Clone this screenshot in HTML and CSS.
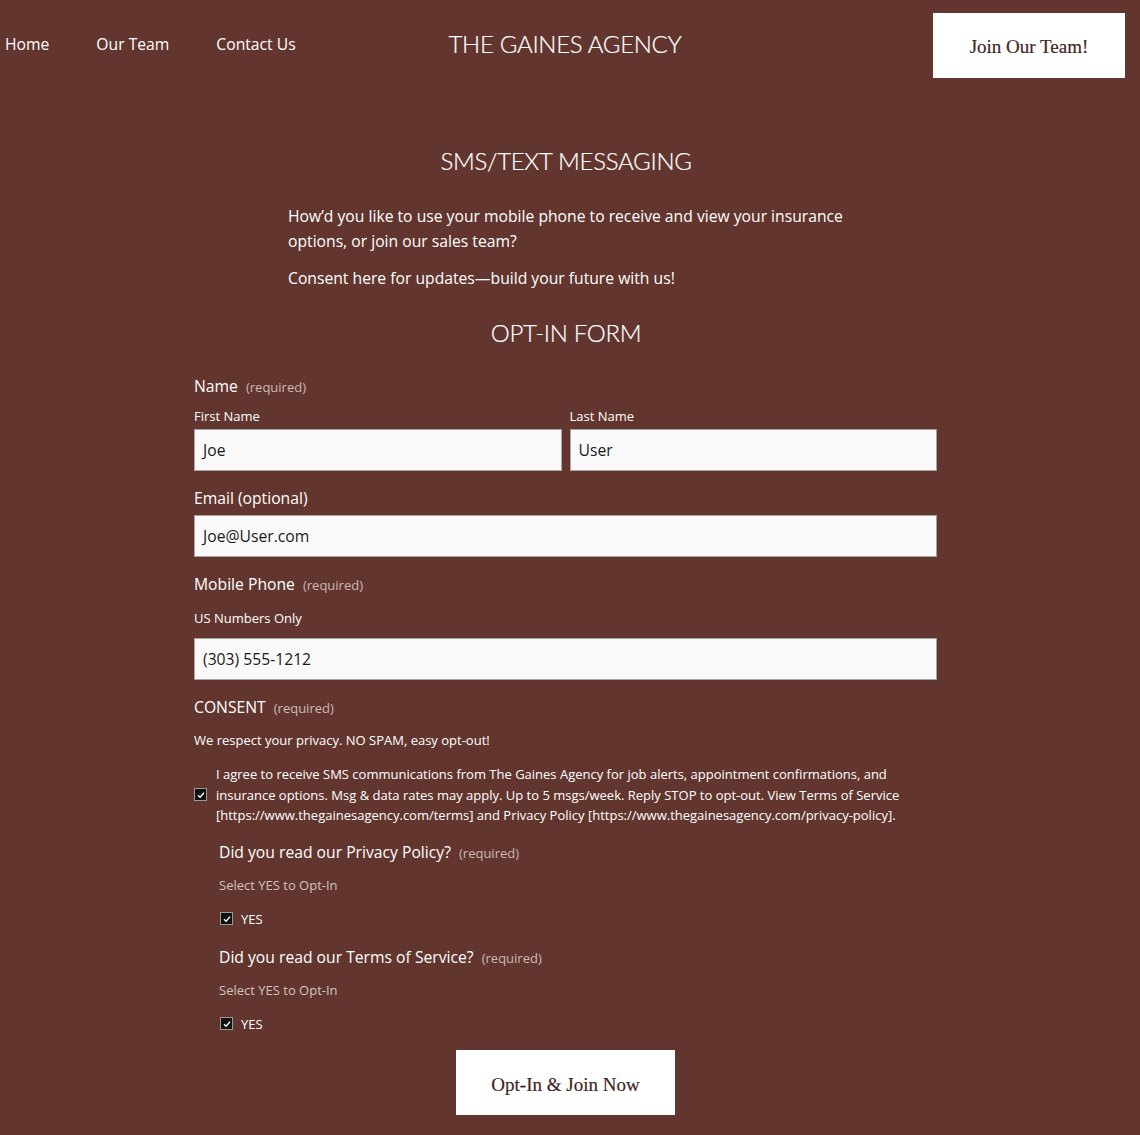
FILE: index.html
```html
<!DOCTYPE html>
<html lang="en">
<head>
<meta charset="utf-8">
<title>SMS/Text Messaging – The Gaines Agency</title>
<link rel="stylesheet" href="styles.css">
</head>
<body>
<header class="header">
  <nav class="nav">
    <a href="#" class="nav-link">Home</a>
    <a href="#" class="nav-link">Our Team</a>
    <a href="#" class="nav-link">Contact Us</a>
  </nav>
  <div class="brand">THE GAINES AGENCY</div>
  <div class="header-right">
    <a href="#" class="btn btn-header">Join Our Team!</a>
  </div>
</header>

<main class="main">
  <h1 class="title title-top">SMS/TEXT MESSAGING</h1>
  <div class="intro">
    <p class="intro-p">How’d you like to use your mobile phone to receive and view your insurance options, or join our sales team?</p>
    <p class="intro-p intro-p2">Consent here for updates—build your future with us!</p>
  </div>
  <h2 class="title title-form">OPT-IN FORM</h2>

  <form class="form">
    <div class="label label-name">Name <span class="req">(required)</span></div>
    <div class="name-row">
      <div class="name-col">
        <div class="sublabel">First Name</div>
        <div class="input">Joe</div>
      </div>
      <div class="name-col">
        <div class="sublabel">Last Name</div>
        <div class="input">User</div>
      </div>
    </div>

    <div class="label label-gap">Email (optional)</div>
    <div class="input input-email">Joe@User.com</div>

    <div class="label label-gap label-phone">Mobile Phone <span class="req">(required)</span></div>
    <div class="sublabel sublabel-phone">US Numbers Only</div>
    <div class="input input-phone">(303) 555-1212</div>

    <div class="label label-gap">CONSENT <span class="req">(required)</span></div>
    <div class="note">We respect your privacy. NO SPAM, easy opt-out!</div>

    <div class="consent">
      <span class="check check-consent"><svg viewBox="0 0 10 10" class="tick"><path d="M2 5.2 L4.1 7.3 L8 2.8" /></svg></span>
      <p class="consent-text">I agree to receive SMS communications from The Gaines Agency for job alerts, appointment confirmations, and insurance options. Msg &amp; data rates may apply. Up to 5 msgs/week. Reply STOP to opt-out. View Terms of Service [https://www.thegainesagency.com/terms] and Privacy Policy [https://www.thegainesagency.com/privacy-policy].</p>
    </div>

    <div class="sub">
      <div class="label sub-q">Did you read our Privacy Policy? <span class="req">(required)</span></div>
      <div class="hint">Select YES to Opt-In</div>
      <div class="yes-row">
        <span class="check"><svg viewBox="0 0 10 10" class="tick"><path d="M2 5.2 L4.1 7.3 L8 2.8" /></svg></span>
        <span class="yes">YES</span>
      </div>

      <div class="label sub-q sub-q2">Did you read our Terms of Service? <span class="req">(required)</span></div>
      <div class="hint">Select YES to Opt-In</div>
      <div class="yes-row">
        <span class="check"><svg viewBox="0 0 10 10" class="tick"><path d="M2 5.2 L4.1 7.3 L8 2.8" /></svg></span>
        <span class="yes">YES</span>
      </div>
    </div>

    <div class="submit-row">
      <a href="#" class="btn btn-submit">Opt-In &amp; Join Now</a>
    </div>
  </form>
</main>
</body>
</html>
```

FILE: styles.css
```css
* { box-sizing: border-box; }

html, body {
  margin: 0;
  padding: 0;
  background: #62362e;
  color: #ffffff;
  font-family: "Open Sans", "Noto Sans", sans-serif;
}

body { min-height: 1135px; }

a { text-decoration: none; color: inherit; }

.header {
  display: grid;
  grid-template-columns: 1fr auto 1fr;
  align-items: center;
  padding: 13px 15px 0 5px;
  height: 78px;
}

.nav {
  display: flex;
  gap: 47px;
  font-size: 15.7px;
  margin-top: -4px;
}

.nav-link { color: #ffffff; }

.brand {
  font-family: "Lato", "Noto Sans", sans-serif;
  font-weight: 300;
  font-size: 24px;
  letter-spacing: -0.3px;
  color: #ffffff;
  margin-top: -4px;
  -webkit-text-stroke: 0.2px #ffffff;
}

.header-right {
  display: flex;
  justify-content: flex-end;
}

.btn {
  display: inline-flex;
  align-items: center;
  justify-content: center;
  background: #ffffff;
  color: #43261f;
  font-family: "Liberation Serif", "DejaVu Serif", serif;
  -webkit-text-stroke: 0.2px #43261f;
}

.btn-header {
  width: 192px;
  height: 65px;
  font-size: 19px;
  padding-top: 2px;
}

.title {
  margin: 0;
  text-align: center;
  font-family: "Lato", "Noto Sans", sans-serif;
  font-weight: 300;
  font-size: 24px;
  letter-spacing: -0.3px;
  line-height: 30px;
  color: #ffffff;
  padding-right: 8px;
  -webkit-text-stroke: 0.2px #ffffff;
}

.title-top { margin-top: 68px; }

.intro {
  width: 565px;
  margin: 28px 0 0 288px;
}

.intro-p {
  margin: 0;
  font-size: 15.7px;
  line-height: 25px;
}

.intro-p2 { margin-top: 12px; }

.title-form { margin-top: 27px; }

.form {
  width: 743px;
  margin: 28px 0 0 194px;
}

.label {
  font-size: 15.7px;
  line-height: 20px;
  color: #ffffff;
}

.req {
  font-size: 13px;
  color: #cdb9b3;
  margin-left: 4px;
}

.name-row {
  display: grid;
  grid-template-columns: 1fr 1fr;
  gap: 8px;
  margin-top: 10px;
}

.sublabel {
  font-size: 13px;
  line-height: 18px;
  color: #ffffff;
  margin-bottom: 4px;
}

.input {
  height: 42px;
  background: #f9f9f9;
  border: 1px solid #a4a4a4;
  color: #1a1a1a;
  font-size: 15.7px;
  line-height: 40px;
  padding-left: 8px;
}

.label-gap { margin-top: 17px; }
.label-phone { margin-top: 17px; }

.input-email { margin-top: 7px; }

.sublabel-phone { margin-top: 14px; margin-bottom: 0; }

.input-phone { margin-top: 11px; }

.note {
  font-size: 13px;
  line-height: 18px;
  margin-top: 13px;
}

.consent {
  display: flex;
  align-items: center;
  gap: 9px;
  margin-top: 15px;
}

.check {
  flex: none;
  display: inline-flex;
  align-items: center;
  justify-content: center;
  width: 13px;
  height: 13px;
  background: #111111;
  border: 1px solid #9a9a9a;
}

.tick {
  width: 10px;
  height: 10px;
  fill: none;
  stroke: #ffffff;
  stroke-width: 1.3;
}

.consent-text {
  margin: 0;
  font-size: 13px;
  line-height: 20.5px;
}

.sub {
  padding-left: 25px;
}

.sub-q { margin-top: 16px; }
.sub-q2 { margin-top: 19px; }

.hint {
  font-size: 13px;
  line-height: 18px;
  color: #d3c3be;
  margin-top: 13px;
}

.yes-row {
  display: flex;
  align-items: center;
  gap: 8px;
  margin-top: 16px;
  height: 18px;
  padding-left: 1px;
}

.yes {
  font-size: 13px;
  line-height: 18px;
}

.submit-row {
  display: flex;
  justify-content: center;
  margin-top: 17px;
}

.btn-submit {
  width: 219px;
  height: 65px;
  font-size: 19px;
  padding-top: 5px;
}
```
